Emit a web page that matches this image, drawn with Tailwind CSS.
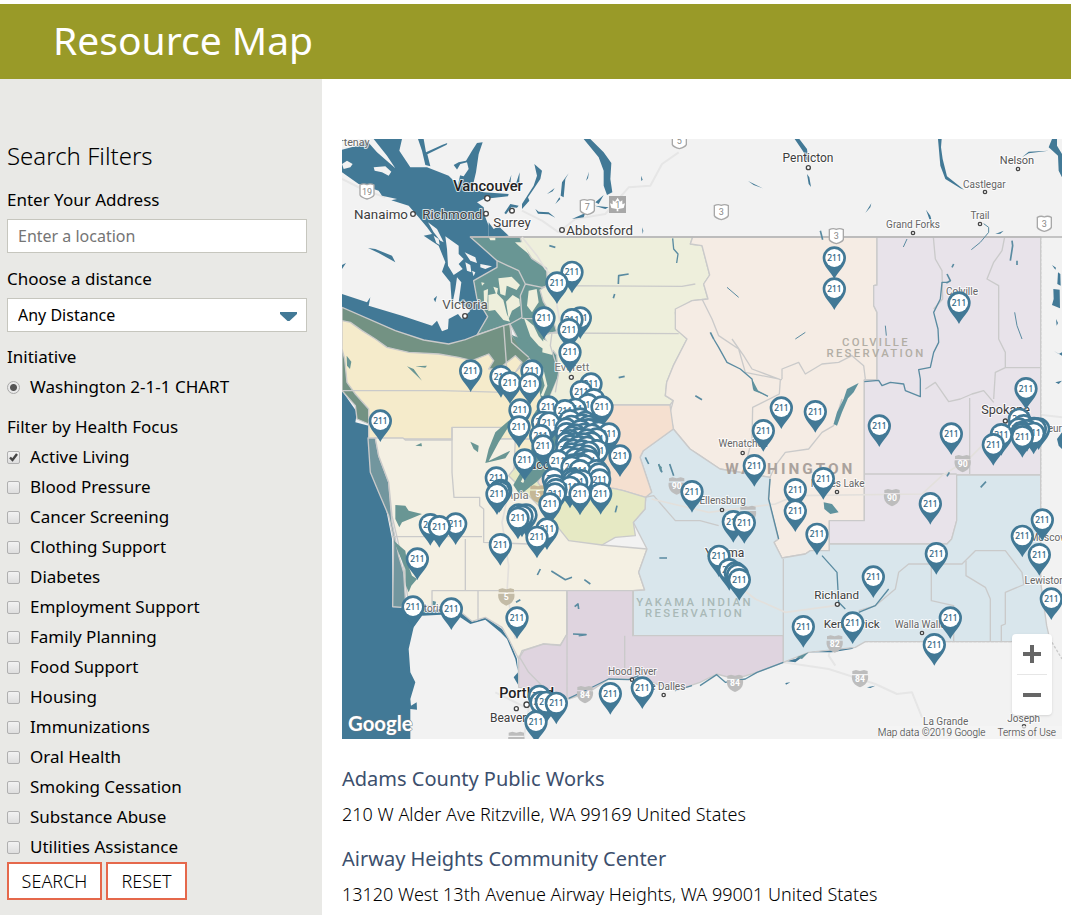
<!DOCTYPE html>
<html lang="en">
<head>
<meta charset="utf-8">
<meta name="viewport" content="width=device-width, initial-scale=1">
<title>Resource Map</title>
<script src="https://cdn.jsdelivr.net/npm/@tailwindcss/browser@4"></script>
</head>
<body class="min-h-screen flex flex-col bg-white font-['Noto_Sans',sans-serif] text-black">
<header class="mt-1 h-[75px] bg-[#999a28] px-[53px]">
  <h1 class="text-[39px] leading-[72px] text-white">Resource Map</h1>
</header>
<div class="flex grow items-stretch">
  <aside class="w-[322px] shrink-0 bg-[#e9e9e6] pt-[61px] px-[7px] pb-[15px]">
    <form onsubmit="return false">
      <h2 class="text-2xl leading-8 font-light">Search Filters</h2>
      <label for="address" class="block mt-[13px] text-[17px] leading-[30px]">Enter Your Address</label>
      <input id="address" type="text" placeholder="Enter a location" class="block mt-1 w-[300px] h-[34px] border border-[#c6c6be] bg-white px-[10px] text-base placeholder:text-[#757575]">
      <label for="distance" class="block mt-[11px] text-[17px] leading-[30px]">Choose a distance</label>
      <div class="relative mt-1 w-[300px]">
        <select id="distance" class="block appearance-none w-full h-[34px] border border-[#c6c6be] bg-white px-[10px] text-base"><option>Any Distance</option></select>
        <svg class="absolute right-[10px] top-[14px] pointer-events-none" width="17" height="10" viewBox="0 0 17 10"><path d="M0 0H17V2L9.500 9H7.500L0 2Z" fill="#427996"/></svg>
      </div>
      <fieldset class="mt-[10px]">
        <legend class="text-[17px] leading-[30px]">Initiative</legend>
        <label class="flex items-center gap-[10px] h-[30px] text-[17px]"><input type="radio" name="initiative" checked class="appearance-none size-[13px] rounded-full border border-[#a9a9a9] bg-[radial-gradient(circle,#555_3px,#e9e9e9_4px)]"><span>Washington 2-1-1 CHART</span></label>
      </fieldset>
      <fieldset class="mt-[10px]" id="focus">
        <legend class="text-[17px] leading-[30px]">Filter by Health Focus</legend>
      </fieldset>
      <div class="flex gap-1">
        <button type="submit" class="h-[38px] w-[95px] border-2 border-[#e5684b] bg-white text-lg leading-none font-light">SEARCH</button>
        <button type="reset" class="h-[38px] w-[81px] border-2 border-[#e5684b] bg-white text-lg leading-none font-light">RESET</button>
      </div>
    </form>
  </aside>
  <main class="grow min-w-0 pt-[60px] pl-5 pr-[9px]">
    <div class="relative">
<svg id="map" viewBox="0 0 2160 1800" class="block w-full h-auto font-[Roboto,sans-serif]" role="img" aria-label="Map of Washington State resources">
<defs>
  <g id="pin"><path d="M0 63C-9 42-35 25-35 0A35 35 0 0 1 35 0C35 25 9 42 0 63Z" fill="#427996"/><circle r="27" fill="#fff"/><text y="9" text-anchor="middle" font-size="25" font-family="Noto Sans" fill="#2f6684" stroke="#2f6684" stroke-width=".6">211</text></g>
  <g id="interstate"><path d="M-23-22L-12-25 0-22 12-25 23-22V-13H-23Z"/><path d="M-24-9H24C27 10 15 22 0 27C-15 22-27 10-24-9Z"/></g>
  <path id="ca" d="M-21-18Q-10-24 0-19Q10-24 21-18V12Q17 20 0 24Q-17 20-21 12Z"/>
</defs>
<rect width="2160" height="1800" fill="#f2f2f2"/>
<g fill="none" stroke="#e6e6e6" stroke-width="6" stroke-linejoin="round">
  <path d="M540 215L600 245 650 280M650 280L700 240 790 225 860 145 925 140 960 75 1010 40M0 120L60 150 130 175M1324 1570L1460 1590 1600 1635 1665 1665 1710 1660 1740 1735M1480 1580L1460 1550 1475 1500M460 1660L560 1710 545 1800M2075 825L2160 835"/>
</g>
<!-- Salish Sea and Strait of Juan de Fuca -->
<g fill="#427996">
  <path d="M0 32L45 20 70 0 105 40 160 88 135 50 95 0 180 0 172 35 205 85 255 85 320 110 348 138 355 105 335 78 350 70 372 65 390 35 405 12 422 10 410 45 402 100 390 150 425 160 500 165 498 172 425 180 405 190 425 205 430 235 440 260 440 292 385 293 465 365 465 385 395 425 405 480 437 533 405 590 360 612 320 615 245 605 160 575 0 510V465L75 490 85 475 80 500 180 530 270 560 285 545 300 577 318 570 320 540 348 525 360 540 385 515 350 490 358 430 345 415 340 450 330 500 325 430 300 398 310 370 290 320 245 290 270 285 255 265 230 235 200 200 148 184 165 180 120 170 110 155 50 135 0 100Z"/>
  <path d="M228 0L245 0 252 40 300 18 316 12 314 17 256 46 265 82 250 78 240 35ZM78 327L100 330 150 350 160 370 110 342ZM275 480L285 470 280 490ZM0 378L12 372 0 390ZM440 250L455 270 470 262 500 290 440 293ZM487 222L505 195 530 200 525 206 508 205 492 226ZM500 130L508 108 504 140ZM520 140L533 100 531 150Z"/>
  <path d="M725 0L745 0 785 40 808 72 805 120 811 160 795 168 785 140 785 95 770 55ZM577 75L600 95 595 120 575 150 558 175 562 185 540 210V195L575 140 585 110ZM660 130L680 103 670 120 665 175 656 170ZM640 195L652 175 655 180ZM615 165L638 147 632 157ZM732 125L741 98 738 118ZM717 145L740 148ZM760 190L785 168 770 195ZM758 200L800 205 790 210ZM690 240L730 222 725 235ZM580 210L590 218 620 220 640 236 620 226 588 224ZM897 110L902 122 898 126ZM900 265L904 275 902 285Z"/>
  <path d="M1358 0H1372L1395 30 1400 70 1395 68 1385 40ZM1395 105L1402 115 1407 144 1400 135ZM1788 0H1799L1797 25 1802 60 1815 112 1866 152 1855 148 1810 120 1795 80ZM1218 126L1262 148 1235 138ZM1570 222L1588 193 1585 205ZM1752 212L1765 230 1770 248 1762 240ZM2130 0H2145V20L2160 45V115L2150 95 2148 50 2120 25ZM2120 35L2060 43 2040 55 2060 38ZM1960 285L1985 275 1975 284ZM2130 378L2142 386 2140 392ZM2148 400L2155 405 2156 440 2146 435ZM2134 450L2153 452 2154 508 2130 498 2135 480ZM2142 540L2148 552 2144 560ZM2140 730L2160 725 2150 735ZM2135 635L2150 645 2160 640V650ZM2145 900L2160 880V930L2150 920Z"/>
  <path d="M0 755L45 820 40 850 80 860V900L90 990 130 1100 150 1200 152 1405 215 1405 215 1465 200 1530 205 1600 220 1630 205 1680 207 1700 224 1690 225 1712 205 1710V1800H0ZM200 1395L270 1415 330 1400 400 1447 430 1435 480 1470 500 1500 525 1560 530 1640 515 1615 528 1600 520 1560 495 1500 475 1480 430 1442 385 1455 340 1425 240 1430 215 1465ZM1325 1565L1360 1570 1400 1540 1470 1540 1530 1530 1570 1505 1585 1480 1570 1460 1555 1480 1560 1500 1530 1522 1470 1532 1400 1535 1360 1560ZM1330 1632L1345 1630 1332 1637ZM1575 1645L1600 1640 1585 1647Z"/>
</g>
<g fill="#f2f2f2">
  <path d="M0 75L15 65 32 75 25 85 5 90ZM95 85L130 82 148 98 140 110 120 100 98 95ZM343 95L355 75 375 70 380 90 365 112 350 108ZM310 292L350 320 350 345 365 360 350 375 362 390 335 408 318 380 315 330ZM368 340L400 355 405 372 385 365ZM415 375L450 382 430 390 415 385ZM370 370L385 378 388 400 375 395ZM275 290L290 300 293 318 283 312ZM258 250L285 270 305 310 295 305 275 280ZM390 395L400 400 395 412Z"/>
</g>
<!-- Washington regions -->
<path fill="#f5ebcb" d="M480 600H720V1060H430V860Z"/>
<g stroke="#cacaca" stroke-width="4" stroke-linejoin="round">
  <path fill="#699694" d="M385 294H640L660 700 560 660 504 555 405 588 437 533 405 480 395 425 465 385V365Z"/>
  <path fill="#739283" d="M0 505L160 575 245 603 320 615 370 602 405 588 485 560 504 555 509 588 560 650 580 720 555 730 500 745 420 870H80V855L45 840 40 800 0 755Z"/>
  <path fill="#f5ebcb" d="M0 545L25 550 60 575 100 600 135 625 200 640 290 645 350 655 390 665 440 645 455 665 440 690 470 690 520 650 540 670 520 700 560 660 580 670 575 720 600 750 600 900H80V810L40 765 15 730 8 660 0 630Z"/>
  <path fill="#72969e" d="M78 897L100 897 110 950 140 1030 150 1150 170 1250 185 1300 190 1380 178 1405 152 1403 155 1200 140 1130 110 1060 85 1000Z"/>
  <path fill="#f4f0e3" d="M100 897H183L190 903H330V865H490L470 900H520L515 1010 620 1130 780 1218 915 1230 890 1300 908 1353 872 1355H675V1485L655 1518 605 1515 540 1535 530 1560 500 1500 480 1465 430 1435 390 1447 345 1410 270 1400 200 1400 185 1280 150 1130 140 1030 110 950Z"/>
  <path fill="#eeefdc" d="M534 294H1052L1045 315 1080 320 1103 408 1085 435 1098 480 1050 485 1000 520 1005 570 1035 600 994 680 974 730 970 770 994 785 984 798H620L624 768 649 708 644 648 619 618 604 588 644 578 629 528 604 488 594 453 616 438 614 388 569 358 539 310Z"/>
  <path fill="#f5ece4" d="M1052 294H1605V438L1595 440V500L1605 520V723H1567V1145H1462V1235L1405 1235 1390 1245 1320 1257 1296 1210 1309 1200 1279 1080 1284 1015 1224 1005 1134 990 1074 950 1044 930 994 870 984 820 994 785 970 770 974 730 994 680 1035 600 1000 570V510L1050 485 1098 480 1085 435 1103 408 1080 320 1045 315Z"/>
  <path fill="#e8e3ea" d="M1605 294H2096V1008H1844V1145L1829 1200 1815 1215H1462V1145H1567V723H1605V520L1595 500V440L1605 438Z"/>
  <path fill="#d9e6ec" d="M1844 1008H2096V1330L2114 1460 2125 1508H1570L1540 1525 1400 1540 1324 1570V1490H874V1355L908 1353 890 1300 915 1230 874 1150 909 1110 911 1075 929 1060 894 955 904 935 994 870 1044 930 1074 950 1134 990 1224 1005 1284 1015 1279 1080 1309 1200 1296 1210 1320 1257 1390 1245 1405 1235 1462 1235V1215H1815L1829 1200 1844 1145Z"/>
  <path fill="#f5e0d0" d="M630 798H984L994 870 904 935 894 955 929 1060 911 1075 844 1055 814 1048 580 1045 640 920Z"/>
  <path fill="#e6e9c4" d="M540 960L600 1048H814L844 1055 911 1075 909 1110 874 1150 880 1190 820 1195 780 1218 680 1205 620 1130 500 1010Z"/>
  <path fill="#dfd4df" d="M675 1355H872V1490H1324V1570L1244 1600 1180 1620 1124 1605 1074 1630 1000 1655 900 1620 800 1620 740 1660 680 1680 600 1650 530 1645V1560L545 1535 605 1515 655 1520 675 1485Z"/>
</g>
<!-- San Juan and Whidbey islands -->
<path fill="#eeefdc" d="M439 468L464 463 484 483 494 523 504 548 484 543 459 513 439 516ZM469 418L509 413 534 438 524 453 494 440 490 470 475 465ZM454 443L468 448 464 470ZM425 455L438 450 436 500 426 490ZM492 488L512 468 532 480 534 500 510 515 500 540ZM418 430L428 432 420 440ZM440 294H460V304H445ZM519 310H545L560 345 530 320ZM560 455L584 450 590 490 570 520 555 500ZM545 535L575 560 590 592 610 615 630 622 618 640 590 620 565 592ZM604 600L635 620 630 650 642 690 630 735 612 720 622 690 600 650Z"/>
<!-- Puget Sound channels -->
<g fill="#699694">
  <path d="M509 588L540 600 600 640 640 650 649 708 624 768 616 798 640 830 644 908 624 988 584 1028 534 1068 514 1038 554 968 584 888 574 828 599 788 590 745 570 700 604 708 585 680 564 658 539 638Z"/>
  <path d="M500 845L508 850 470 910 440 966 505 935 490 958 430 972 440 930 460 880Z"/>
  <path d="M160 1098L190 1100 200 1115 240 1125 180 1150 172 1165 160 1140ZM155 1205L190 1235 195 1270 210 1310 225 1320 208 1340 200 1360 192 1340 190 1290ZM14 650L28 668 24 690 15 680ZM195 682L215 690 240 725ZM220 682L255 680 250 686ZM75 735L90 745ZM80 810L125 795ZM220 838L258 830ZM385 908L410 920 408 940 395 930ZM220 920L238 912 240 922Z"/>
</g>
<path d="M575 668L600 690 612 740 600 770M560 990L540 1030" fill="none" stroke="#eeefdc" stroke-width="8" stroke-linejoin="round"/>
<g fill="none" stroke="#cacaca" stroke-width="4" stroke-linejoin="round">
  <path d="M0 755H80L300 755 490 760M485 560L495 700 520 760M330 865V1000L336 1075H413V1100L425 1110V1210L560 1215M150 1193H420M370 1200V1355M270 1405V1355H675V1680M408 1355V1440M465 365L530 395 550 435 600 445 620 440 1020 442 1060 435M550 435L535 470 540 535 504 555M540 538L620 540M620 582L1010 584M504 555L509 610 560 655M630 580L625 620 650 700 640 760M872 1355V1490M848 1595V1490M1774 294L1780 360 1800 395 1802 480 1775 510M1988 294L1980 335 1955 370 1935 420 1970 440V600L1990 640V686H2096M1990 686L1960 700 1955 780M1955 790L1925 755 1890 765 1855 780 1820 788 1780 730 1750 750M1883 777V1005M1567 1005H1844M1080 480L1110 540 1130 590 1190 630 1210 700 1320 722M1170 600L1205 650 1230 690 1315 722 1312 765 1232 805 1230 900 1205 1000M1320 720L1320 690 1370 670 1390 705 1440 675 1490 670 1530 650 1565 680 1570 720M1324 1570V1260M909 1075L935 1070 1000 1145 1074 1145 1130 1160M1768 1275V1385L1835 1400V1508M1872 1265V1310L1930 1345 1945 1380V1508M1978 1508V1460L1990 1455V1360L2050 1335M530 1550L560 1600 600 1640"/>
  <path d="M1284 1015L1300 980 1330 940 1400 930 1440 880 1475 860 1500 780M1550 1415L1600 1400 1660 1350 1670 1300 1700 1275 1860 1275 1900 1235 1990 1235 2040 1300 2045 1335"/>
  <path d="M2096 294V1330M1570 1508H2115M2130 1510L2160 1560" stroke-dasharray="8 5"/>
  <path d="M385 294H2160" stroke="#b5b5b5"/>
</g>
<g fill="none" stroke="#e3e0dc" stroke-width="5"><path d="M540 294L585 350 610 390 640 420 645 500 680 700M500 1060L480 1150 500 1280 495 1360 520 1500M929 1080L1100 1120 1300 1095 1360 1070 1740 1065 1800 1010 1880 960 1960 880 2040 850M1160 1320L1240 1380 1330 1420 1480 1400" /></g>
<!-- Rivers and lakes -->
<g fill="none" stroke="#5a8ba1" stroke-width="5" stroke-linejoin="round">
  <path d="M992 298L995 330 1008 345 1004 372M1115 600L1130 625 1155 670 1195 690 1230 720 1235 750 1278 772M1567 728L1610 724 1620 740 1645 730 1685 735 1690 755 1735 773 1735 720 1730 692 1765 685 1775 640 1790 610 1788 570 1775 520 1795 480 1800 430 1815 430M1284 1020L1280 1080 1310 1200M1440 1250L1485 1300 1490 1390 1510 1410M1324 1570L1245 1600 1210 1620 1150 1630 1124 1607 1074 1640M1550 1420L1600 1400 1640 1350M1050 1640L1000 1655M890 1610L860 1622 800 1620 740 1650 680 1678" stroke-width="4"/>
  <path d="M1925 254L1940 265 1940 280 1915 310 1888 332M1684 324L1695 300M2018 520L2025 560 2040 600M1155 445L1190 475M1360 600L1390 580M1630 560L1633 590" stroke-width="3"/>
  <path d="M1435 275L1442 302M2005 365L2012 320 2010 305M1815 405L1825 425 1813 432M1830 385L1835 375M2025 365V378M1105 580L1115 600M860 405L830 410 829 435M814 478L818 465M622 320L640 325M586 1308L595 1290M628 1296L670 1322 690 1315M727 1322L745 1335M698 1403L708 1395 710 1410M693 1485L732 1487 710 1490M952 1257H975M820 1120L825 1100M830 716L848 712M1060 770L1080 782M1815 1012L1822 1000M1916 1045L1932 1028M522 1390L535 1382M910 955L920 975M950 975L960 1000M983 975L995 1010"/>
</g>
<path fill="#5f929d" d="M1550 732L1535 760 1518 778 1500 820 1485 860 1475 855 1485 820 1505 780 1515 750ZM1445 1090L1470 1095 1490 1120 1465 1125 1447 1110ZM948 975L960 985 955 1000ZM1364 1555L1400 1540 1380 1560ZM1230 720L1235 755 1278 772 1250 758ZM272 1385L282 1388 280 1400 272 1398Z"/>
<!-- Road shields -->
<g fill="#fff" stroke="#a8a8a8" stroke-width="4"><use href="#ca" x="75" y="156"/><use href="#ca" x="736" y="203"/><use href="#ca" x="1012" y="5"/><use href="#ca" x="1138" y="218"/><use href="#ca" x="1483" y="290"/><use href="#ca" x="2107" y="253"/></g>
<rect x="801" y="171" width="51" height="51" fill="#a8a8a8"/><path fill="#fff" d="M827 176L834 188 841 184V196L849 193 845 207 829 210V217H824V210L808 207 804 193 812 196V184L819 188Z"/>
<g fill="#888" font-size="27" text-anchor="middle"><text x="75" y="167">19</text><text x="736" y="214">7</text><text x="1012" y="16">5</text><text x="827" y="207">1</text><text x="1138" y="228">3</text><text x="1483" y="300">3</text><text x="2107" y="263">3</text></g>
<g fill="#bdbdbd"><use href="#interstate" x="1862" y="973"/><use href="#interstate" x="1650" y="1075"/><use href="#interstate" x="1218" y="1125"/><use href="#interstate" x="1004" y="1040"/><use href="#interstate" x="588" y="1064" fill="#c5b796"/><use href="#interstate" x="493" y="1373" fill="#c3bba6"/><use href="#interstate" x="729" y="1666"/><use href="#interstate" x="1179" y="1632"/><use href="#interstate" x="1554" y="1618"/><use href="#interstate" x="1478" y="1514"/><use href="#interstate" x="523" y="1803"/></g>
<g fill="#fff" font-size="26" font-weight="700" text-anchor="middle"><text x="1862" y="984">90</text><text x="1650" y="1086">90</text><text x="1004" y="1050">90</text><text x="588" y="1074">5</text><text x="493" y="1384">5</text><text x="729" y="1677">84</text><text x="1179" y="1642">84</text><text x="1554" y="1628">84</text><text x="1478" y="1524">82</text></g>
<!-- Place names -->
<g fill="#3d3d3d" font-size="38" text-anchor="middle" stroke="#fff" stroke-opacity=".75" stroke-width="6" stroke-linejoin="round" style="paint-order:stroke">
  <text x="38" y="20" font-size="32" fill="#666">rtenay</text>
  <text x="438" y="156" font-size="44" font-weight="500" fill="#222">Vancouver</text>
  <g font-size="40"><text x="117" y="239">Nanaimo</text><text x="331" y="239">Richmond</text><text x="510" y="263">Surrey</text><text x="773" y="287">Abbotsford</text></g><text x="369" y="511" font-size="40" fill="#555">Victoria</text>
  <text x="1398" y="70" font-size="36">Penticton</text><text x="2025" y="74" font-size="33" fill="#555">Nelson</text>
  <g font-size="30" fill="#666"><text x="1927" y="146">Castlegar</text><text x="1914" y="241">Trail</text><text x="1713" y="268">Grand Forks</text><text x="1860" y="469">Colville</text><text x="1204" y="925">Wenatchee</text><text x="1487" y="1045">Moses Lake</text><text x="1142" y="1096">Ellensburg</text><text x="1735" y="1468">Walla Walla</text><text x="871" y="1609">Hood River</text><text x="960" y="1654">The Dalles</text><text x="1811" y="1758">La Grande</text><text x="2045" y="1748">Joseph</text><text x="2108" y="1335">Lewiston</text><text x="2120" y="1205">Moscow</text><text x="2120" y="878">Coeur</text><text x="258" y="1420">Astoria</text></g>
  <text x="690" y="697" font-size="34" fill="#777">Everett</text><text x="1991" y="825">Spokane</text><text x="1148" y="1254" font-size="36">Yakima</text><text x="1484" y="1381" font-size="35">Richland</text><text x="1529" y="1467" font-size="35">Kennewick</text><text x="498" y="1079" font-size="34" fill="#777">Olympia</text><text x="610" y="990">Tacoma</text>
  <text x="554" y="1676" font-size="43" font-weight="500" fill="#222">Portland</text><text x="525" y="1749" font-size="36">Beaverton</text>
</g>
<g font-weight="500" text-anchor="middle">
  <g font-size="34" letter-spacing="7" fill="#b2aea5"><text x="1602" y="620">COLVILLE</text><text x="1602" y="653">RESERVATION</text></g>
  <g font-size="34" letter-spacing="7" fill="#a9b9b7"><text x="1058" y="1401">YAKAMA INDIAN</text><text x="1058" y="1433">RESERVATION</text></g>
  <text x="1345" y="1005" font-size="46" letter-spacing="9" fill="#aaa29d" font-weight="700">WASHINGTON</text>
</g>
<g fill="#fff" stroke="#444" stroke-width="4"><circle cx="436" cy="178" r="8"/><circle cx="213" cy="225" r="7"/><circle cx="432" cy="224" r="7"/><circle cx="510" cy="215" r="7"/><circle cx="660" cy="273" r="7"/><circle cx="369" cy="531" r="7"/><circle cx="1399" cy="86" r="6"/><circle cx="2028" cy="90" r="5"/><circle cx="1929" cy="159" r="5"/><circle cx="1914" cy="255" r="5"/><circle cx="1713" cy="282" r="5"/><circle cx="688" cy="715" r="6"/><circle cx="1990" cy="846" r="6"/><circle cx="1202" cy="942" r="5"/><circle cx="1485" cy="1059" r="5"/><circle cx="1140" cy="1113" r="5"/><circle cx="1486" cy="1396" r="6"/><circle cx="1740" cy="1482" r="5"/><circle cx="965" cy="1668" r="5"/><circle cx="870" cy="1622" r="5"/><circle cx="554" cy="1697" r="8"/><circle cx="523" cy="1709" r="6"/><circle cx="2046" cy="1762" r="5"/></g>
<g id="pins"></g>
<text x="18" y="1775" font-size="61" font-family="Lato" font-weight="700" fill="#fff" stroke="#6a7a85" stroke-width="3" style="paint-order:stroke">Google</text>
</svg>
      <div class="absolute right-[10px] bottom-6 w-10 rounded-sm bg-white shadow flex flex-col items-center">
        <button type="button" aria-label="Zoom in" class="size-10 grid place-items-center"><svg width="18" height="18" viewBox="0 0 18 18" fill="#666"><path d="M7 0h4v7h7v4h-7v7H7v-7H0V7h7z"/></svg></button>
        <span class="h-px w-[30px] bg-[#e6e6e6]"></span>
        <button type="button" aria-label="Zoom out" class="size-10 grid place-items-center"><svg width="18" height="4" viewBox="0 0 18 4" fill="#666"><path d="M0 0h18v4H0z"/></svg></button>
      </div>
      <div class="absolute right-0 bottom-0 flex gap-3 bg-[#f5f5f5]/70 pr-[6px] text-[10px] leading-[13px] font-light text-[#333] font-[Roboto,sans-serif]">
        <span>Map data ©2019 Google</span><a href="#">Terms of Use</a>
      </div>
    </div>
    <section class="mt-[25px]">
      <h3 class="text-xl leading-[30px] text-[#3c4f6d]"><a href="#">Adams County Public Works</a></h3>
      <p class="mt-[5px] text-lg leading-[30px] font-light">210 W Alder Ave Ritzville, WA 99169 United States</p>
    </section>
    <section class="mt-[15px]">
      <h3 class="text-xl leading-[30px] text-[#3c4f6d]"><a href="#">Airway Heights Community Center</a></h3>
      <p class="mt-[5px] text-lg leading-[30px] font-light">13120 West 13th Avenue Airway Heights, WA 99001 United States</p>
    </section>
  </main>
</div>
<script>
const focuses = ['Active Living','Blood Pressure','Cancer Screening','Clothing Support','Diabetes','Employment Support','Family Planning','Food Support','Housing','Immunizations','Oral Health','Smoking Cessation','Substance Abuse','Utilities Assistance'];
document.getElementById('focus').insertAdjacentHTML('beforeend', focuses.map((name, i) => `
<label class="flex items-center gap-[10px] h-[30px] text-[17px]"><span class="grid"><input type="checkbox" ${i ? '' : 'checked'} class="peer col-start-1 row-start-1 appearance-none size-[13px] rounded-[2px] border border-[#b0b0b0] bg-linear-to-b from-[#f2f2f2] to-[#dedede]"><svg class="col-start-1 row-start-1 invisible peer-checked:visible pointer-events-none" width="13" height="13" viewBox="0 0 13 13" fill="none" stroke="#444" stroke-width="2.400"><path d="M3 6.500L5.500 9 10 3"/></svg></span><span>${name}</span></label>`).join(''));
/* Pin head centres in map units; pins further south overlap those to the north. */
const pins = [[690,400],[645,432],[606,537],[715,537],[690,542],[681,572],[684,640],[386,696],[477,713],[504,732],[570,696],[564,735],[747,735],[718,758],[755,782],[738,797],[780,804],
[619,804],[534,813],[602,850],[621,852],[531,864],[596,890],
[669,815],[700,811],[684,845],[714,840],[730,850],[740,862],[672,870],[688,862],[720,858],[755,872],[770,880],[715,875],[739,872],[674,884],[801,885],[699,888],[726,886],[750,888],[690,895],[764,900],[684,905],[712,900],[735,903],[674,912],[700,914],[725,915],[748,912],[684,921],[710,923],[735,925],[765,935],[674,932],[695,934],[720,936],[740,940],[603,921],[689,945],[714,948],[735,952],[680,955],[700,960],[724,962],[714,975],[740,966],[648,966],[694,978],[724,980],[764,995],[548,963],[834,951],[690,985],[714,995],
[634,1020],[639,1040],[642,1052],[639,1065],[689,1020],[694,1026],[704,1030],[719,1025],[771,1005],[773,1023],[684,1045],[624,1095],[776,1064],[714,1066],[463,1017],[476,1054],[472,1058],[465,1065],[115,846],[552,1128],[530,1128],[540,1132],[528,1138],[615,1170],[585,1195],[475,1217],[265,1157],[341,1155],[292,1163],[226,1260],[213,1404],[328,1410],[525,1437],
[1477,357],[1477,450],[1851,492],[1318,807],[1420,818],[1264,875],[1237,980],[1444,1019],[1360,1052],[1360,1116],[1425,1186],[1612,861],[1828,885],[2052,749],[2032,841],[2076,868],[2090,870],[2080,870],[2030,870],[2045,860],[2055,875],[2075,883],[2040,880],[2040,886],[1978,887],[1954,917],[2041,893],[1765,1094],[1050,1058],[1174,1148],[1207,1151],[1131,1252],[1162,1292],[1180,1302],[1187,1308],[1192,1322],[1783,1244],[1594,1314],[1384,1463],[1532,1452],[1825,1437],[1777,1517],[2101,1143],[2041,1192],[2092,1247],[2128,1380],[805,1664],[901,1647],[592,1672],[597,1690],[613,1690],[643,1693],[582,1749]];
pins.sort((a, b) => a[1] - b[1]);
document.getElementById('pins').innerHTML = pins.map(([x, y]) => `<use href="#pin" x="${x}" y="${y}"/>`).join('');
</script>
</body>
</html>
